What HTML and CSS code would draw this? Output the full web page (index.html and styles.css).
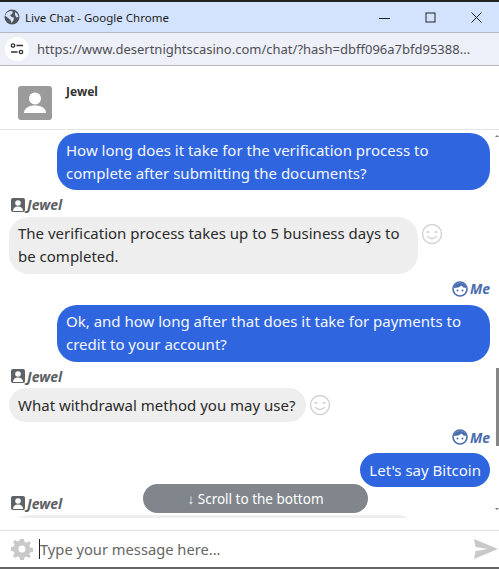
FILE: index.html
```html
<!DOCTYPE html>
<html lang="en">
<head>
  <meta charset="UTF-8">
  <title>Live Chat - Google Chrome</title>
  <link rel="stylesheet" href="styles.css">
</head>
<body>
  <div class="window">
    <div class="title-bar">
      <svg class="globe" width="16" height="16" viewBox="0 0 16 16"><circle cx="8" cy="8" r="7.500" fill="#50545a"/><path d="M3 3.500l3-1.500 3 .5-1 2.500-2 1 1.500 2 2.500.5-.5 3-2 2.500-1-3-2.500-2-3-2.500zM11 3l2.500 2 1 3-2 .5-1.500-2.500z" fill="#d3e3fd"/></svg>
      <span class="title-text">Live Chat - Google Chrome</span>
      <div class="win-controls">
        <svg width="11" height="11" viewBox="0 0 11 11"><path d="M0 6.500h11" stroke="#222" fill="none"/></svg>
        <svg width="11" height="11" viewBox="0 0 11 11"><rect x="1" y="1" width="9" height="9" stroke="#222" fill="none"/></svg>
        <svg width="11" height="11" viewBox="0 0 11 11"><path d="M.5.500l10 10M10.500.500l-10 10" stroke="#222" fill="none"/></svg>
      </div>
    </div>
    <div class="url-bar">
      <span class="site-info">
        <svg width="14" height="12" viewBox="0 0 14 12"><circle cx="3" cy="2.500" r="1.700" fill="none" stroke="#333" stroke-width="1.300"/><path d="M6.500 2.500H13M1 9h6.500" stroke="#333" stroke-width="1.400" fill="none"/><circle cx="11" cy="9" r="1.700" fill="none" stroke="#333" stroke-width="1.300"/></svg>
      </span>
      <span class="url-text">https://www.desertnightscasino.com/chat/?hash=dbff096a7bfd95388...</span>
    </div>

    <div class="agent-header">
      <svg class="agent-avatar" width="34" height="34" viewBox="0 0 34 34"><rect width="34" height="34" rx="3" fill="#9b9b9b"/><circle cx="17" cy="12.500" r="6" fill="#fff"/><path d="M6 27c0-5 5-7.500 11-7.500S28 22 28 27z" fill="#fff"/></svg>
      <span class="agent-name">Jewel</span>
    </div>

    <div class="chat-area">
      <div class="messages">
        <div class="bubble me">How long does it take for the verification process to complete after submitting the documents?</div>

        <div class="sender">
          <svg width="14" height="14" viewBox="0 0 14 14"><rect width="14" height="14" rx="2" fill="#5f6266"/><circle cx="7" cy="5" r="2.800" fill="#fff"/><path d="M2 13c0-3 2-4.500 5-4.500s5 1.500 5 4.500z" fill="#fff"/></svg>
          <span>Jewel</span>
        </div>
        <div class="agent-row">
          <div class="bubble them">The verification process takes up to 5 business days to be completed.</div>
          <svg class="smiley" width="22" height="22" viewBox="0 0 22 22"><circle cx="11" cy="11" r="9.500" fill="none" stroke="#d4d4d4" stroke-width="1.500"/><path d="M5.500 9.500q1.500-1.500 3 0M13.500 9.500q1.500-1.500 3 0M6 13q5 5 10 0" fill="none" stroke="#d4d4d4" stroke-width="1.300"/></svg>
        </div>

        <div class="sender mine">
          <svg width="16" height="16" viewBox="0 0 16 16"><circle cx="8" cy="8" r="7" fill="#fff" stroke="#4a6db0" stroke-width="1.600"/><path d="M1.500 7Q3 2 8 2t6.500 5Q11 7 9.500 4.500 7 7 1.500 7z" fill="#4a6db0"/><circle cx="5.500" cy="9.500" r="1" fill="#4a6db0"/><circle cx="10.500" cy="9.500" r="1" fill="#4a6db0"/></svg>
          <span>Me</span>
        </div>
        <div class="bubble me">Ok, and how long after that does it take for payments to credit to your account?</div>

        <div class="sender">
          <svg width="14" height="14" viewBox="0 0 14 14"><rect width="14" height="14" rx="2" fill="#5f6266"/><circle cx="7" cy="5" r="2.800" fill="#fff"/><path d="M2 13c0-3 2-4.500 5-4.500s5 1.500 5 4.500z" fill="#fff"/></svg>
          <span>Jewel</span>
        </div>
        <div class="agent-row">
          <div class="bubble them">What withdrawal method you may use?</div>
          <svg class="smiley" width="22" height="22" viewBox="0 0 22 22"><circle cx="11" cy="11" r="9.500" fill="none" stroke="#d4d4d4" stroke-width="1.500"/><path d="M5.500 9.500q1.500-1.500 3 0M13.500 9.500q1.500-1.500 3 0M6 13q5 5 10 0" fill="none" stroke="#d4d4d4" stroke-width="1.300"/></svg>
        </div>

        <div class="sender mine">
          <svg width="16" height="16" viewBox="0 0 16 16"><circle cx="8" cy="8" r="7" fill="#fff" stroke="#4a6db0" stroke-width="1.600"/><path d="M1.500 7Q3 2 8 2t6.500 5Q11 7 9.500 4.500 7 7 1.500 7z" fill="#4a6db0"/><circle cx="5.500" cy="9.500" r="1" fill="#4a6db0"/><circle cx="10.500" cy="9.500" r="1" fill="#4a6db0"/></svg>
          <span>Me</span>
        </div>
        <div class="bubble me">Let's say Bitcoin</div>

        <div class="sender last">
          <svg width="14" height="14" viewBox="0 0 14 14"><rect width="14" height="14" rx="2" fill="#5f6266"/><circle cx="7" cy="5" r="2.800" fill="#fff"/><path d="M2 13c0-3 2-4.500 5-4.500s5 1.500 5 4.500z" fill="#fff"/></svg>
          <span>Jewel</span>
        </div>
        <div class="bubble them cut"></div>
      </div>
      <div class="scroll-arrow up"></div>
      <div class="scroll-thumb"></div>
      <div class="scroll-arrow down"></div>
      <button class="scroll-bottom">↓ Scroll to the bottom</button>
    </div>

    <div class="input-row">
      <svg class="gear" width="22" height="22" viewBox="0 0 22 22"><path fill-rule="evenodd" fill="#c9c9c9" d="M9 1h4l.6 3 1.900.8L18 3l2 2-1.800 2.500.8 1.900 3 .6v4l-3 .6-.8 1.900L20 18l-2 2-2.500-1.500-1.900.8L13 22H9l-.6-2.700-1.900-.8L4 20l-2-2 1.500-2.500-.8-1.900L0 13V9l2.700-.6.8-1.900L2 4l2-2 2.500 1.500 1.900-.8zM11 7.500a3.500 3.500 0 1 0 0 7 3.500 3.500 0 0 0 0-7z"/></svg>
      <div class="message-input"><span class="caret"></span><span>Type your message here...</span></div>
      <svg class="send" width="24" height="20" viewBox="0 0 24 20"><path d="M0 0l24 10L0 20l1.500-8L14 10 1.500 8z" fill="#c9c9c9"/></svg>
    </div>
  </div>
</body>
</html>
```

FILE: styles.css
```css
body {
  margin: 0;
  font-family: "Noto Sans", "Open Sans", Arial, sans-serif;
  background: white;
  overflow: hidden;
}

.window {
  width: 499px;
  height: 569px;
  box-sizing: border-box;
  display: flex;
  flex-direction: column;
  border-top: 2px solid #222;
  border-bottom: 2px solid #666;
}

.title-bar {
  height: 30px;
  flex-shrink: 0;
  background: #d3e3fd;
  display: flex;
  align-items: center;
  padding-left: 4px;
  border-bottom: 1px solid #b4b9c2;
}

.globe {
  margin-right: 5px;
}

.title-text {
  font-size: 11.5px;
  color: #222;
}

.win-controls {
  margin-left: auto;
  display: flex;
  gap: 35px;
  padding-right: 17px;
}

.url-bar {
  height: 32px;
  flex-shrink: 0;
  background: #edf0f9;
  display: flex;
  align-items: center;
  padding-left: 5px;
  border-bottom: 1px solid #b8b8b8;
}

.site-info {
  width: 24px;
  height: 24px;
  border-radius: 50%;
  background: white;
  display: flex;
  align-items: center;
  justify-content: center;
  margin-right: 8px;
}

.url-text {
  font-size: 13px;
  color: #4d4f53;
  white-space: nowrap;
}

.agent-header {
  height: 64px;
  flex-shrink: 0;
  display: flex;
  align-items: flex-start;
  padding: 20px 0 0 18px;
  box-sizing: border-box;
  border-bottom: 1px solid #e4e4e4;
}

.agent-name {
  font-size: 12px;
  font-weight: bold;
  color: #333;
  margin: -3px 0 0 14px;
}

.chat-area {
  position: relative;
  height: 388px;
  flex-shrink: 0;
  overflow: hidden;
}

.messages {
  display: flex;
  flex-direction: column;
  padding: 3px 9px 0;
}

.bubble {
  font-size: 15px;
  line-height: 23px;
  padding: 5.5px 10px 5.5px 9px;
  border-radius: 20px;
  box-sizing: border-box;
}

.bubble.me {
  background: #2f66e0;
  color: #f4f7fe;
  align-self: flex-end;
  width: fit-content;
  max-width: 433px;
  padding: 5.5px 9px;
}

.bubble.them {
  background: #eeeeee;
  color: #2b2b2b;
  max-width: 409px;
}

.bubble.cut {
  width: 409px;
  height: 57px;
  flex-shrink: 0;
}

.agent-row {
  display: flex;
  align-items: flex-start;
}

.smiley {
  flex-shrink: 0;
  margin: 6px 0 0 3px;
}

.sender {
  display: flex;
  align-items: center;
  gap: 2px;
  height: 16px;
  margin: 6.5px 0 4px 2px;
  font-size: 14px;
  font-weight: bold;
  font-style: italic;
  color: #5c5f64;
}

.sender.mine {
  justify-content: flex-end;
  color: #4a6db0;
  margin: 7px 0 8px;
}

.sender.last {
  margin-top: 8px;
}

.scroll-thumb {
  position: absolute;
  right: 0;
  top: 238px;
  width: 3px;
  height: 78px;
  background: #868686;
}

.scroll-arrow {
  position: absolute;
  right: 0;
  width: 0;
  height: 0;
  border-left: 2px solid transparent;
  border-right: 2px solid transparent;
}

.scroll-arrow.up {
  top: 5px;
  border-bottom: 2px solid #777;
}

.scroll-arrow.down {
  bottom: 8px;
  border-top: 2px solid #777;
}

.scroll-bottom {
  position: absolute;
  left: 143px;
  top: 354px;
  width: 225px;
  height: 29px;
  border: none;
  border-radius: 15px;
  background: #80868b;
  color: white;
  font-family: inherit;
  font-size: 13.5px;
  padding: 0;
}

.input-row {
  margin-top: 12px;
  border-top: 1px solid #e2e2e2;
  flex: 1;
  min-height: 0;
  display: flex;
  align-items: center;
  padding: 0 1px 0 11px;
}

.message-input {
  flex: 1;
  font-size: 14.7px;
  color: #666;
  display: flex;
  align-items: center;
  margin-left: 6px;
}

.caret {
  width: 1px;
  height: 20px;
  background: #222;
}
```
